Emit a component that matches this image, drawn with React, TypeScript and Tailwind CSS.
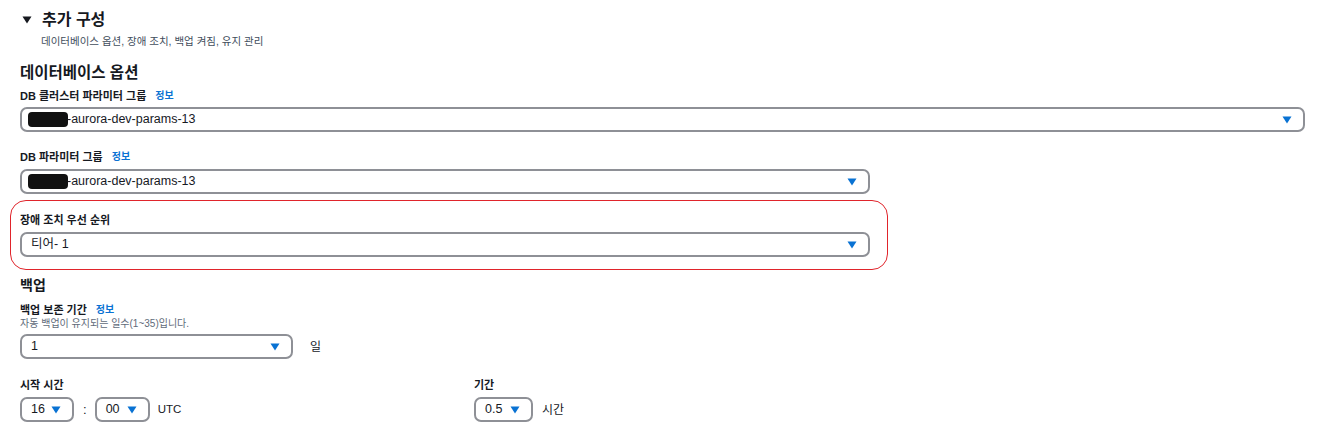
import React from "react";

const Caret = ({ className = "" }: { className?: string }) => (
  <svg width="10" height="8" viewBox="0 0 10 8" className={className}>
    <path d="M0.5 0.5h9L5 7.5z" fill="currentColor" />
  </svg>
);

function Select({
  children,
  className = "",
}: {
  children: React.ReactNode;
  className?: string;
}) {
  return (
    <div
      className={`flex h-[25px] items-center justify-between rounded-[7px] border-2 border-[#8e9096] bg-white pl-[9px] pr-[11px] text-[12.5px] text-[#16191f] ${className}`}
    >
      <div className="flex items-center">{children}</div>
      <Caret className="text-[#0972d3]" />
    </div>
  );
}

function Label({ text, info }: { text: string; info?: boolean }) {
  return (
    <div className="flex items-center text-[11px] font-bold leading-[16px] text-[#16191f]">
      {text}
      {info && (
        <span className="ml-[9px] text-[10px] font-bold text-[#0972d3]">정보</span>
      )}
    </div>
  );
}

function Redacted() {
  return <span className="ml-[-3px] mr-[-1px] inline-block h-[15px] w-[40px] rounded-[4px] bg-[#111]" />;
}

export default function App() {
  return (
    <div
      className="min-h-[435px] w-[1325px] bg-white pl-[20px] pt-[8px] text-[#16191f]"
      style={{ fontFamily: '"Liberation Sans", "Noto Sans CJK KR", sans-serif' }}
    >
      {/* header */}
      <div className="flex h-[24px] items-center">
        <Caret className="ml-[2px] text-[#16191f]" />
        <span className="ml-[10px] text-[16px] font-semibold leading-[24px]">추가 구성</span>
      </div>
      <div className="mt-[2px] pl-[21px] text-[10.5px] leading-[14px] text-[#414d5c]">
        데이터베이스 옵션, 장애 조치, 백업 켜짐, 유지 관리
      </div>

      <div className="mt-[15px] text-[15.5px] font-bold leading-[20px]">데이터베이스 옵션</div>

      <div className="mt-[5px]">
        <Label text="DB 클러스터 파라미터 그룹" info />
      </div>
      <Select className="mt-[3px] w-[1285px]">
        <Redacted />
        <span>-aurora-dev-params-13</span>
      </Select>

      <div className="mt-[17px]">
        <Label text="DB 파라미터 그룹" info />
      </div>
      <Select className="mt-[4px] w-[850px]">
        <Redacted />
        <span>-aurora-dev-params-13</span>
      </Select>

      {/* highlighted failover priority */}
      <div className="ml-[-10px] mt-[6px] w-[878px] rounded-[16px] border border-[#e0242b] pb-[12px] pl-[9px] pt-[11px]">
        <Label text="장애 조치 우선 순위" />
        <Select className="mt-[4px] w-[850px]">
          <span>티어- 1</span>
        </Select>
      </div>

      <div className="mt-[5px] text-[14px] font-bold leading-[20px]">백업</div>

      <div className="mt-[7px]">
        <Label text="백업 보존 기간" info />
      </div>
      <div className="text-[10px] leading-[12px] text-[#5f6b7a]">자동 백업이 유지되는 일수(1~35)입니다.</div>
      <div className="mt-[4px] flex items-center">
        <Select className="w-[273px]">
          <span>1</span>
        </Select>
        <span className="ml-[17px] text-[12px]">일</span>
      </div>

      <div className="mt-[18px] flex">
        <div className="w-[454px]">
          <Label text="시작 시간" />
          <div className="mt-[4px] flex items-center">
            <Select className="w-[54px]">
              <span>16</span>
            </Select>
            <span className="ml-[9px] mr-[8px] text-[13px]">:</span>
            <Select className="w-[55px]">
              <span>00</span>
            </Select>
            <span className="ml-[8px] text-[11.5px]">UTC</span>
          </div>
        </div>
        <div>
          <Label text="기간" />
          <div className="mt-[4px] flex items-center">
            <Select className="w-[59px]">
              <span>0.5</span>
            </Select>
            <span className="ml-[9px] text-[12px]">시간</span>
          </div>
        </div>
      </div>
    </div>
  );
}
